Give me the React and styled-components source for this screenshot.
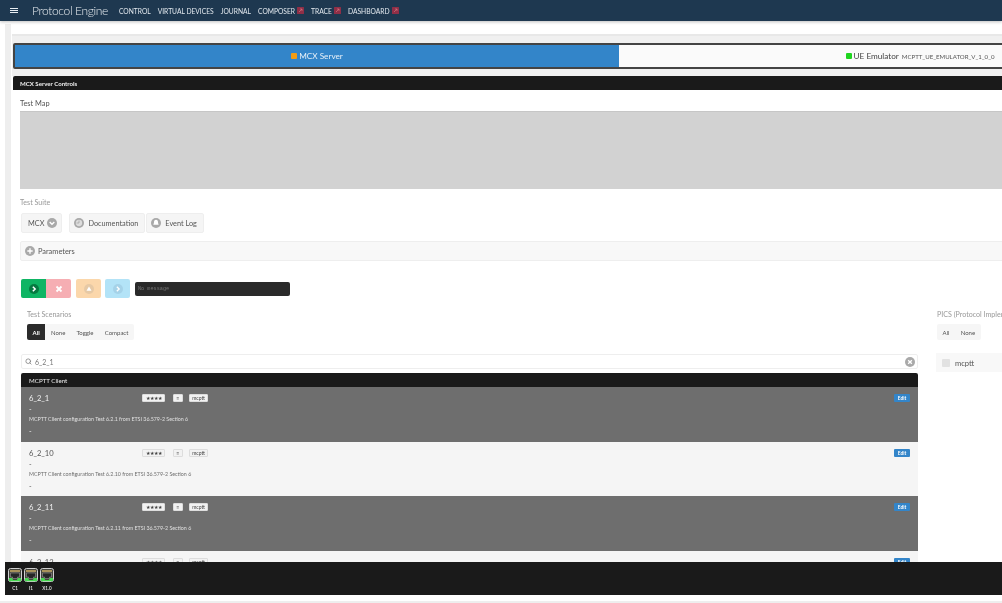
import React from "react";
import styled, { createGlobalStyle } from "styled-components";
import { Search } from "lucide-react";

const GlobalStyle = createGlobalStyle`
  html, body {
    margin: 0;
    height: 100%;
    overflow: hidden;
    background: #fff;
    font-family: "Lato", "Noto Sans", sans-serif;
    color: #444;
  }
  #root {
    height: 603px;
    overflow: hidden;
    will-change: transform;
  }
  * { box-sizing: border-box; }
`;

const navItems = [
  { label: "CONTROL" },
  { label: "VIRTUAL DEVICES" },
  { label: "JOURNAL" },
  { label: "COMPOSER", external: true },
  { label: "TRACE", external: true },
  { label: "DASHBOARD", external: true },
];

const rows = [
  { id: "6_2_1", desc: "MCPTT Client configuration Test 6.2.1 from ETSI 36.579-2 Section 6", dark: true },
  { id: "6_2_10", desc: "MCPTT Client configuration Test 6.2.10 from ETSI 36.579-2 Section 6" },
  { id: "6_2_11", desc: "MCPTT Client configuration Test 6.2.11 from ETSI 36.579-2 Section 6", dark: true },
  { id: "6_2_12", desc: "MCPTT Client configuration Test 6.2.12 from ETSI 36.579-2 Section 6" },
];

function ExternalIcon() {
  return (
    <svg width="7" height="7" viewBox="0 0 7 7">
      <rect width="7" height="7" rx="0.5" fill="#8f2f47" />
      <path d="M2 5l3-3M3 2h2v2" stroke="#d97a86" strokeWidth="0.6" fill="none" />
    </svg>
  );
}

function CircleIcon({ size = 10, fill = "#a9a9a9", children }) {
  return (
    <svg width={size} height={size} viewBox="0 0 12 12">
      <circle cx="6" cy="6" r="6" fill={fill} />
      {children}
    </svg>
  );
}

function PortIcon() {
  return (
    <svg width="14" height="14" viewBox="0 0 14 14">
      <rect x="0.5" y="0.5" width="13" height="13" rx="2" fill="#45453f" stroke="#d0d0d0" />
      <rect x="2" y="2" width="10" height="2" fill="#a8925a" />
      <path d="M2.5 5h9v4h-2v1.5h-5V9h-2z" fill="#262626" stroke="#aaa" strokeWidth="0.5" />
      <path d="M1 10h3l1.5 2.5H1zM13 10h-3l-1.5 2.5H13z" fill="#46d850" />
      <rect x="1" y="12" width="12" height="1.2" fill="#46d850" />
    </svg>
  );
}

function TestRow({ id, desc, dark }) {
  return (
    <Row $dark={dark}>
      <RowMain>
        <RowTitle>{id}</RowTitle>
        <RowDash>-</RowDash>
        <RowDesc>{desc}</RowDesc>
        <RowDash $top={2}>-</RowDash>
      </RowMain>
      <Badges>
        <Badge $width={23}>★★★★</Badge>
        <Badge $width={10} $gap={8}>≡</Badge>
        <Badge $width={19} $gap={6}>mcptt</Badge>
      </Badges>
      <EditButton>Edit</EditButton>
    </Row>
  );
}

export default function App() {
  return (
    <>
      <GlobalStyle />
      <Header>
        <Burger>
          <span />
          <span />
          <span />
        </Burger>
        <Brand>Protocol Engine</Brand>
        <Nav>
          {navItems.map((item) => (
            <NavItem key={item.label}>
              {item.label}
              {item.external && <ExternalIcon />}
            </NavItem>
          ))}
        </Nav>
      </Header>

      <Shell>
        <Rail />
        <Main>
          <TopCard />
          <TabBand>
            <Tabs>
              <Tab $active>
                <Led $color="#f39c12" />
                MCX Server
              </Tab>
              <Tab>
                <Led $color="#1fd51f" />
                UE Emulator <TabVersion>MCPTT_UE_EMULATOR_V_1_0_0</TabVersion>
              </Tab>
            </Tabs>
          </TabBand>

          <Panel>
            <PanelHeader>MCX Server Controls</PanelHeader>
            <PanelBody>
              <SectionLabel>Test Map</SectionLabel>
              <MapBox />
              <MutedLabel>Test Suite</MutedLabel>
              <SuiteRow>
                <DropdownButton>
                  MCX
                  <CircleIcon size={10}>
                    <path d="M3.2 4.8L6 7.6l2.8-2.8" stroke="#fff" strokeWidth="1.6" fill="none" />
                  </CircleIcon>
                </DropdownButton>
                <SuiteButton $mr={1}>
                  <CircleIcon size={10}>
                    <circle cx="6" cy="6" r="3.8" fill="#ddd" />
                    <path d="M6 3v3H3" stroke="#a9a9a9" strokeWidth="1" fill="none" />
                  </CircleIcon>
                  Documentation
                </SuiteButton>
                <SuiteButton>
                  <CircleIcon size={10}>
                    <path d="M6 2.2c-1.8 0-2.4 1.4-2.4 3 0 1.4-.8 2.2-.8 3h6.4c0-.8-.8-1.6-.8-3 0-1.6-.6-3-2.4-3z" fill="#fff" />
                  </CircleIcon>
                  Event Log
                </SuiteButton>
              </SuiteRow>

              <ParametersBar>
                <CircleIcon size={10}>
                  <path d="M6 2.8v6.4M2.8 6h6.4" stroke="#fff" strokeWidth="1.6" />
                </CircleIcon>
                Parameters
              </ParametersBar>

              <ActionRow>
                <ActionGroup>
                  <ActionButton $bg="#0fb564" $round="left">
                    <CircleIcon size={10} fill="#067a41">
                      <path d="M4.6 3.2L7.4 6 4.6 8.8" stroke="#fff" strokeWidth="1.8" fill="none" />
                    </CircleIcon>
                  </ActionButton>
                  <ActionButton $bg="#f6aeb3" $round="right">
                    <svg width="8" height="8" viewBox="0 0 8 8">
                      <path d="M1.5 1.5l5 5M6.5 1.5l-5 5" stroke="#fff" strokeWidth="1.8" />
                    </svg>
                  </ActionButton>
                </ActionGroup>
                <ActionButton $bg="#fbd7ab" $round="both">
                  <CircleIcon size={10} fill="#e6c9a5">
                    <path d="M6 3L9 8H3z" fill="#fff" />
                  </CircleIcon>
                </ActionButton>
                <ActionButton $bg="#b3e3f7" $round="both">
                  <CircleIcon size={10} fill="#a5d2e8">
                    <path d="M4.6 3.2L7.4 6 4.6 8.8" stroke="#fff" strokeWidth="1.6" fill="none" />
                  </CircleIcon>
                </ActionButton>
                <MessageBox>No message</MessageBox>
              </ActionRow>

              <Columns>
                <ScenarioColumn>
                  <ColumnHead $indent={6}>
                    <MutedLabel>Test Scenarios</MutedLabel>
                    <Toggles>
                      <ToggleButton $active>All</ToggleButton>
                      <ToggleButton>None</ToggleButton>
                      <ToggleButton>Toggle</ToggleButton>
                      <ToggleButton>Compact</ToggleButton>
                    </Toggles>
                  </ColumnHead>

                  <SearchBar>
                    <Search size={7} color="#777" strokeWidth={2.5} />
                    <SearchText>6_2_1</SearchText>
                    <ClearSlot>
                      <CircleIcon size={10}>
                        <path d="M3.8 3.8l4.4 4.4M8.2 3.8l-4.4 4.4" stroke="#fff" strokeWidth="1.6" />
                      </CircleIcon>
                    </ClearSlot>
                  </SearchBar>

                  <GroupHeader>MCPTT Client</GroupHeader>
                  {rows.map((row) => (
                    <TestRow key={row.id} {...row} />
                  ))}
                </ScenarioColumn>

                <PicsColumn>
                  <ColumnHead>
                    <MutedLabel>PICS (Protocol Implementation Conformance)</MutedLabel>
                    <Toggles>
                      <ToggleButton>All</ToggleButton>
                      <ToggleButton>None</ToggleButton>
                    </Toggles>
                  </ColumnHead>
                  <PicsRow>
                    <PicsCheck />
                    mcptt
                  </PicsRow>
                </PicsColumn>
              </Columns>
            </PanelBody>
          </Panel>
        </Main>
      </Shell>

      <PortBar>
        <Port>
          <PortIcon />
          <PortLabel>C1</PortLabel>
        </Port>
        <Port>
          <PortIcon />
          <PortLabel>I1</PortLabel>
        </Port>
        <Port>
          <PortIcon />
          <PortLabel>X1.0</PortLabel>
        </Port>
      </PortBar>
      <BottomStrip />
    </>
  );
}

const Header = styled.header`
  position: relative;
  z-index: 2;
  height: 21px;
  display: flex;
  align-items: center;
  padding-left: 10px;
  background: #1e3850;
  box-shadow: 0 1px 3px rgba(0, 0, 0, 0.25);
`;
const Burger = styled.div`
  width: 8px;
  display: flex;
  flex-direction: column;
  gap: 1px;
  margin-right: 14px;
  span {
    display: block;
    height: 1px;
    background: #e8eef3;
  }
`;
const Brand = styled.div`
  width: 87px;
  font-size: 12px;
  letter-spacing: -0.35px;
  font-weight: 300;
  color: #e6ebef;
  white-space: nowrap;
`;
const Nav = styled.nav`
  display: flex;
  gap: 7px;
`;
const NavItem = styled.div`
  display: flex;
  align-items: center;
  gap: 2px;
  font-size: 6.7px;
  color: #e2e8ee;
  white-space: nowrap;
`;
const Shell = styled.div`
  display: flex;
  width: 1240px;
  padding-left: 5px;
`;
const Rail = styled.div`
  flex: none;
  width: 6px;
  margin-top: 3px;
  height: 580px;
  background: #eeeeee;
`;
const Main = styled.main`
  flex: 1;
  min-width: 0;
`;
const TopCard = styled.div`
  height: 15px;
  margin-left: 1px;
  background: #fff;
  border-bottom: 2px solid #e8e8e8;
`;
const TabBand = styled.div`
  height: 40px;
  margin-left: 1px;
  padding-top: 7px;
  background: #f0f0f0;
`;
const Tabs = styled.div`
  display: flex;
  height: 26px;
  margin-left: 1px;
  width: 1210px;
  border: 2px solid #444;
  border-radius: 2px;
  background: #fff;
`;
const Tab = styled.div`
  flex: ${({ $active }) => ($active ? "0 0 604px" : "1")};
  display: flex;
  align-items: center;
  justify-content: center;
  gap: 2px;
  font-size: 8.2px;
  background: ${({ $active }) => ($active ? "#3385c9" : "#fafafa")};
  color: ${({ $active }) => ($active ? "#e8f1f8" : "#444")};
`;
const Led = styled.span`
  width: 6px;
  height: 6px;
  border-radius: 1px;
  background: ${({ $color }) => $color};
`;
const TabVersion = styled.span`
  margin-left: 1px;
  font-size: 6.1px;
  color: #555;
`;
const Panel = styled.section`
  margin-left: 2px;
  width: 1210px;
`;
const PanelHeader = styled.div`
  height: 14px;
  display: flex;
  align-items: center;
  padding-left: 7px;
  font-size: 6.1px;
  font-weight: 700;
  color: #eee;
  background: #1a1a1a;
  border-radius: 2px 2px 0 0;
`;
const PanelBody = styled.div`
  padding: 9px 0 0 7px;
`;
const SectionLabel = styled.div`
  height: 12px;
  font-size: 7.4px;
  line-height: 10px;
  color: #555;
`;
const MutedLabel = styled(SectionLabel)`
  padding-top: 1px;
  color: #999;
  white-space: nowrap;
  font-size: 7.1px;
`;
const MapBox = styled.div`
  height: 78px;
  margin-bottom: 8px;
  background: #d2d2d2;
  border-top: 1px solid #c6c6c6;
`;
const SuiteRow = styled.div`
  display: flex;
  height: 20px;
  margin: 4px 0 8px 1px;
`;
const SuiteButton = styled.div`
  display: flex;
  align-items: center;
  gap: 4px;
  padding: 0 6px 0 4px;
  margin-right: ${({ $mr }) => $mr || 0}px;
  font-size: 7.3px;
  color: #555;
  background: #f5f5f5;
  border: 1px solid #eee;
  border-radius: 2px;
`;
const DropdownButton = styled(SuiteButton)`
  gap: 3px;
  padding: 0 4px 0 6px;
  margin-right: 7px;
`;
const ParametersBar = styled.div`
  display: flex;
  align-items: center;
  gap: 3px;
  height: 20px;
  padding-left: 4px;
  font-size: 7.4px;
  color: #555;
  background: #f8f8f8;
  border: 1px solid #eee;
  border-radius: 2px;
`;
const ActionRow = styled.div`
  display: flex;
  align-items: center;
  gap: 4px;
  height: 19px;
  margin: 18px 0 0 1px;
`;
const ActionGroup = styled.div`
  display: flex;
  margin-right: 1px;
`;
const radii = {
  left: "2px 0 0 2px",
  right: "0 2px 2px 0",
  both: "2px",
};
const ActionButton = styled.div`
  width: 25px;
  height: 19px;
  display: flex;
  align-items: center;
  justify-content: center;
  background: ${({ $bg }) => $bg};
  border-radius: ${({ $round }) => radii[$round]};
`;
const MessageBox = styled.div`
  width: 155px;
  height: 14px;
  margin-left: 1px;
  padding-left: 3px;
  display: flex;
  align-items: center;
  font-family: "Liberation Mono", monospace;
  font-size: 5.2px;
  color: #777;
  background: #2a2a2a;
  border-radius: 2px;
`;
const Columns = styled.div`
  display: flex;
  margin-top: 11px;
`;
const ScenarioColumn = styled.div`
  flex: none;
  width: 897px;
  margin-left: 1px;
`;
const ColumnHead = styled.div`
  display: flex;
  flex-direction: column;
  align-items: flex-start;
  padding-left: ${({ $indent }) => $indent || 0}px;
  height: 45px;
`;
const Toggles = styled.div`
  display: flex;
  height: 16px;
  margin-top: 3px;
  background: #f6f6f6;
  border-radius: 2px;
`;
const ToggleButton = styled.div`
  display: flex;
  align-items: center;
  padding: 0 5.6px;
  font-size: 6px;
  font-weight: ${({ $active }) => ($active ? 700 : 400)};
  color: ${({ $active }) => ($active ? "#fff" : "#555")};
  background: ${({ $active }) => ($active ? "#2b2b2b" : "transparent")};
  border-radius: 2px 0 0 2px;
`;
const SearchBar = styled.div`
  display: flex;
  align-items: center;
  height: 15px;
  padding-left: 3px;
  background: #fff;
  border: 1px solid #eee;
  border-radius: 2px;
`;
const SearchText = styled.div`
  margin-left: 3px;
  font-size: 7px;
  color: #777;
`;
const ClearSlot = styled.div`
  margin-left: auto;
  margin-right: 2px;
  display: flex;
`;
const GroupHeader = styled.div`
  height: 14px;
  margin-top: 4px;
  display: flex;
  align-items: center;
  padding-left: 8px;
  font-size: 6.2px;
  color: #eee;
  background: #1a1a1a;
  border-radius: 2px 2px 0 0;
`;
const Row = styled.div`
  position: relative;
  display: flex;
  height: 54.5px;
  padding: 7px 8px 0;
  background: ${({ $dark }) => ($dark ? "#6e6e6e" : "#f5f5f5")};
  color: ${({ $dark }) => ($dark ? "#f2f2f2" : "#555")};
`;
const RowMain = styled.div`
  width: 113px;
  flex: none;
  white-space: nowrap;
`;
const RowTitle = styled.div`
  margin: -1px 0 1px;
  font-size: 7.6px;
  line-height: 10px;
`;
const RowDash = styled.div`
  font-size: 7px;
  line-height: 11px;
  margin-top: ${({ $top }) => $top || 0}px;
`;
const RowDesc = styled.div`
  font-size: 5.3px;
  line-height: 9px;
  opacity: 0.85;
`;
const Badges = styled.div`
  display: flex;
  height: 8px;
`;
const Badge = styled.div`
  width: ${({ $width }) => $width}px;
  margin-left: ${({ $gap }) => $gap || 0}px;
  display: flex;
  align-items: center;
  justify-content: center;
  font-size: 5px;
  color: #444;
  background: #f2f2f2;
  border: 1px solid #ddd;
  border-radius: 1px;
  white-space: nowrap;
  overflow: hidden;
`;
const EditButton = styled.div`
  width: 16px;
  height: 8px;
  margin-left: auto;
  display: flex;
  align-items: center;
  justify-content: center;
  font-size: 4.8px;
  font-weight: 700;
  color: #fff;
  background: #3385c9;
  border-radius: 1px;
`;
const PicsColumn = styled.div`
  margin-left: 19px;
  width: 280px;
  flex: none;
`;
const PicsRow = styled.div`
  display: flex;
  align-items: center;
  gap: 5px;
  height: 19px;
  margin-left: -1px;
  margin-top: -1px;
  padding-left: 6px;
  font-size: 7.6px;
  color: #555;
  background: #f8f8f8;
`;
const PicsCheck = styled.span`
  width: 8px;
  height: 8px;
  background: #e2e2e2;
  border-radius: 1px;
`;
const PortBar = styled.footer`
  position: fixed;
  left: 5px;
  right: 0;
  top: 562px;
  height: 33px;
  display: flex;
  gap: 2px;
  padding: 6px 0 0 3px;
  background: #1a1a1a;
`;
const Port = styled.div`
  width: 14px;
  display: flex;
  flex-direction: column;
  align-items: center;
  gap: 3px;
`;
const PortLabel = styled.span`
  font-size: 4.6px;
  font-weight: 700;
  color: #ddd;
  white-space: nowrap;
`;
const BottomStrip = styled.div`
  position: fixed;
  left: 0;
  right: 0;
  top: 595px;
  height: 8px;
  background: #fff;
  border-bottom: 2px solid #eee;
`;
